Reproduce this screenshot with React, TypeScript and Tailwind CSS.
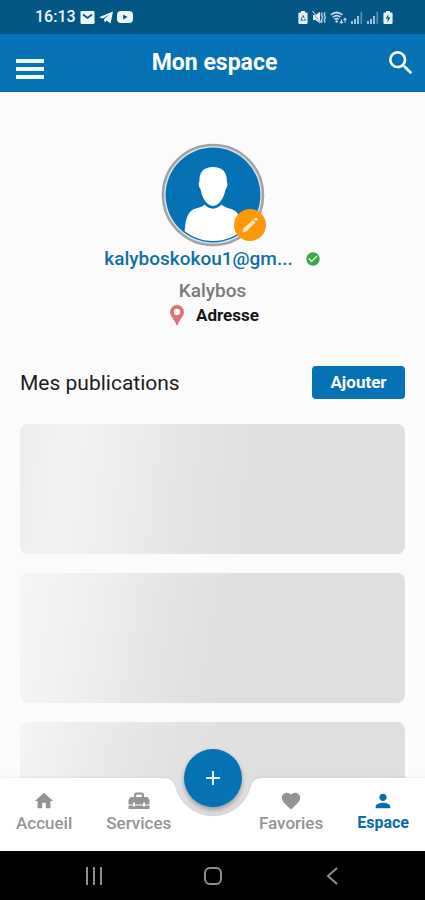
import type { ReactNode } from "react";
import {
  MdCheckCircle,
  MdFavorite,
  MdHome,
  MdPerson,
  MdSearch,
} from "react-icons/md";

const CARDS = [
  { id: 1, shade: "bg-[linear-gradient(96deg,#ececec_0%,#f3f3f3_12%,#e6e6e6_42%,#dfdfdf_64%)]" },
  { id: 2, shade: "bg-[linear-gradient(100deg,#f6f6f6_0%,#f1f1f1_14%,#e6e6e6_36%,#dfdfdf_54%)]" },
  { id: 3, shade: "bg-[linear-gradient(104deg,#f5f5f5_0%,#eaeaea_20%,#e3e3e3_38%,#dfdfdf_52%)]" },
];

function MailIcon() {
  return (
    <svg className="h-[13px] w-[15px]" viewBox="0 0 15 13" fill="none">
      <rect x="0.5" width="14" height="13" rx="1" fill="#eef6fb" />
      <path d="M3 3.5 7.5 7 12 3.5" stroke="#045685" strokeWidth="1.6" />
    </svg>
  );
}

function TelegramIcon() {
  return (
    <svg className="h-[13px] w-[14px]" viewBox="0 0 14 13" fill="#eef6fb">
      <path d="M0 6.2 14 .5 11.6 12.4 7.6 9.4 5.8 11.6 5 8.2 10.6 3.4 3.8 7.4Z" />
    </svg>
  );
}

function YoutubeIcon() {
  return (
    <svg className="h-3 w-4" viewBox="0 0 16 12">
      <rect width="16" height="12" rx="4" fill="#eef6fb" />
      <path d="M6.2 3.4v5.2L10.6 6Z" fill="#045685" />
    </svg>
  );
}

function RecycleBatteryIcon() {
  return (
    <svg className="h-[13px] w-[10px]" viewBox="0 0 10 13" fill="none">
      <path d="M3 0h4v1.6h1.6Q9.6 1.6 9.6 2.8v9Q9.6 13 8.4 13H1.6Q.4 13 .4 11.8v-9Q.4 1.6 1.4 1.6H3Z" fill="#e6f0f6" />
      <path d="M5 4.6 7.4 9.2H2.6Z" stroke="#045685" strokeWidth="1" strokeDasharray="2.6 1" />
    </svg>
  );
}

function MuteIcon() {
  return (
    <svg className="h-[13px] w-[14px]" viewBox="0 0 14 13" fill="none">
      <path d="M1 4h2.600L8 .8v11.400L3.600 9H1Z" fill="#e6f0f6" />
      <path d="M.6.8 9 12" stroke="#045685" strokeWidth="1" />
      <path d="M.6 0 9.400 12" stroke="#e6f0f6" strokeWidth="1" />
      <path d="M10 1.500 9.400 4l1.200 2.500L9.400 9l.6 2.500M13 1.500 12.200 4l1.200 2.500L12.200 9l.8 2.500" stroke="#c5dae7" strokeWidth="1.3" />
    </svg>
  );
}

function WifiIcon() {
  return (
    <svg className="h-[13px] w-[17px]" viewBox="0 0 17 13" fill="none" stroke="#c5dae7">
      <path d="M.8 3.800Q6.500-.8 12.400 3.800M2.800 6.200Q6.600 3.200 10.400 6.200M4.600 8.400Q6.600 6.800 8.600 8.400" strokeWidth="1.7" />
      <path d="m6.600 9 1.600 1.600-1.600 1.400L5 10.600Z" fill="#c5dae7" stroke="none" />
      <path d="M11.400 12V8.400M10 10.600l1.400 1.600 1.400-1.600M15 11.600V7.400M13.600 9 15 7.400 16.400 9" strokeWidth="1.1" />
    </svg>
  );
}

function SignalIcon() {
  return (
    <svg className="h-[13px] w-3" viewBox="0 0 12 13" fill="#9cc0d6">
      <path d="M0 10h2v3H0ZM3 8h2v5H3ZM6 5h2v8H6Z" />
      <path d="M9.5 1h1.6v12H9.5Z" fill="#5790b2" />
    </svg>
  );
}

function ChargingIcon() {
  return (
    <svg className="h-[13px] w-[10px]" viewBox="0 0 10 13">
      <path d="M3 0h4v1.6h1.6Q9.6 1.6 9.6 2.8v9Q9.6 13 8.4 13H1.6Q.4 13 .4 11.8v-9Q.4 1.6 1.4 1.6H3Z" fill="#e6f0f6" />
      <path d="M5.6 3.2 2.6 7.6h2.2L4.2 11.4 7.4 6.4H5.2Z" fill="#045685" />
    </svg>
  );
}

function Avatar() {
  return (
    <svg className="size-[104px]" viewBox="0 0 104 104">
      <defs>
        <clipPath id="disc">
          <circle cx="52" cy="52" r="46" />
        </clipPath>
      </defs>
      <circle cx="52" cy="52" r="50" fill="#dfe9f0" stroke="#a3a3a3" strokeWidth="2.6" />
      <circle cx="52" cy="52" r="47.4" fill="#0572b6" />
      <g clipPath="url(#disc)" fill="#fff">
        <path d="M52 24c9 0 14 5 13.8 13.6 0 1 .8 2 .6 4.4-.2 2.6-1.4 3-1.8 4.6C63 55 58 63 52 63s-11-8-12.4-16.400c-.4-1.600-1.600-2-1.800-4.600-.2-2.400.8-3.400.7-4.400C38.200 29 43 24 52 24Z" />
        <path d="M43.500 61.500c4.500 5.500 12.500 5.500 17 0 3 3.500 9 3.500 13 6 5.500 3.500 7 14 7.500 22.500V98H23.500v-8c.5-8.500 1.500-18 7-22.500 4-3 10-2.500 13-6Z" />
      </g>
    </svg>
  );
}

function PencilIcon() {
  return (
    <svg className="size-[18px]" viewBox="0 0 18 18" fill="#ffe9c8">
      <path d="M1.500 16.500 2.200 12.800 11.800 4 14.200 6.400 5 15.800Z" />
      <path d="m12.600 3.200 1.600-1.400q.8-.6 1.500.1l.6.700q.7.700 0 1.500L14.900 5.600Z" />
    </svg>
  );
}

function PinIcon() {
  return (
    <svg className="h-5 w-[14px]" viewBox="0 0 14 20" fill="#e07078">
      <path fillRule="evenodd" d="M7 0a7 7 0 0 1 7 7c0 4.500-5.200 8-6.300 13H6.300C5.200 15 0 11.500 0 7a7 7 0 0 1 7-7Zm0 3.800a3.200 3.200 0 1 0 0 6.400 3.200 3.200 0 0 0 0-6.400Z" />
    </svg>
  );
}

function ToolboxIcon() {
  return (
    <svg className="h-[22px] w-[22px]" viewBox="0 0 22 22" fill="currentColor">
      <path fillRule="evenodd" d="M6 7V4.800Q6 2.600 8.200 2.600h5.600q2.200 0 2.200 2.200V7h3.500L21.500 10v4.600H17V12.500h-2v2.100H7V12.500H5v2.100H.5V10L2.500 7Zm2.200 0h5.600V4.800H8.200Z" />
      <path d="M.5 15.600H5v1h2v-1h8v1h2v-1h4.500V19H.5Z" />
    </svg>
  );
}

function NavItem({ label, icon, active = false }: { label: string; icon: ReactNode; active?: boolean }) {
  return (
    <a
      href="#"
      aria-current={active ? "page" : undefined}
      className={active ? "flex flex-col items-center text-[#0a6ca9]" : "flex flex-col items-center text-[#949494]"}
    >
      {icon}
      <span className={active ? "text-base leading-[22px] font-bold" : "text-[17px] leading-[22px] font-medium"}>{label}</span>
    </a>
  );
}

export default function App() {
  return (
    <div className="flex h-screen flex-col overflow-hidden bg-[#fbfbfb] font-['Roboto',sans-serif]">
      <div className="flex h-[34px] shrink-0 items-center justify-between bg-[#045685] pr-8 pl-[35px]">
        <div className="flex items-center gap-1">
          <span className="text-base font-medium text-[#eef6fb]">16:13</span>
          <MailIcon />
          <TelegramIcon />
          <YoutubeIcon />
        </div>
        <div className="flex items-center gap-1">
          <RecycleBatteryIcon />
          <MuteIcon />
          <WifiIcon />
          <SignalIcon />
          <SignalIcon />
          <ChargingIcon />
        </div>
      </div>

      <header className="flex h-[58px] shrink-0 items-center justify-between bg-[#0572b6] pr-2 pl-4 text-white">
        <button type="button" aria-label="Menu" className="flex w-7 flex-col gap-1 pt-3">
          <span className="h-1 w-full bg-[#eef7fc]" />
          <span className="h-1 w-full bg-[#eef7fc]" />
          <span className="h-1 w-full bg-[#eef7fc]" />
        </button>
        <h1 className="text-[23px] font-bold">Mon espace</h1>
        <button type="button" aria-label="Rechercher">
          <MdSearch className="size-8" />
        </button>
      </header>

      <div className="relative min-h-0 flex-1">
        <main className="h-full overflow-hidden px-5 pt-[51px]">
          <section className="flex flex-col items-center">
            <div className="relative">
              <Avatar />
              <button
                type="button"
                aria-label="Modifier la photo"
                className="absolute -right-px bottom-[6px] grid size-8 place-items-center rounded-full bg-[#fe9808]"
              >
                <PencilIcon />
              </button>
            </div>
            <div className="flex items-center gap-3">
              <span className="text-[19px] leading-6 font-medium text-[#126ea8]">kalyboskokou1@gm...</span>
              <MdCheckCircle className="size-4 text-[#3fa648]" />
            </div>
            <p className="mt-2 text-[19px] leading-6 font-medium text-[#7a7a7a]">Kalybos</p>
            <div className="flex items-center gap-3 pl-1">
              <PinIcon />
              <span className="text-[17px] leading-6 font-bold text-[#161616]">Adresse</span>
            </div>
          </section>

          <section className="mt-[39px]">
            <div className="flex items-center justify-between">
              <h2 className="text-[21px] leading-6 text-[#1c1c1c]">Mes publications</h2>
              <button type="button" className="h-[33px] w-[93px] rounded bg-[#0572b6] text-[17px] font-bold text-white">
                Ajouter
              </button>
            </div>
            <div className="mt-[25px] flex flex-col gap-[19px]">
              {CARDS.map((card) => (
                <div key={card.id} className={`h-[130px] rounded-lg ${card.shade}`} />
              ))}
            </div>
          </section>
        </main>

        <div className="absolute inset-x-0 bottom-0">
          <div className="absolute inset-0 flex drop-shadow-[0_-1px_1px_rgba(0,0,0,0.06)]">
            <div className="flex-1 bg-white" />
            <svg className="h-full w-[100px]" viewBox="0 0 100 73" preserveAspectRatio="none" fill="#fff">
              <path d="M0 0C8 0 10 3 12 8A39 39 0 0 0 88 8C90 3 92 0 100 0V73H0Z" />
            </svg>
            <div className="flex-1 bg-white" />
          </div>
          <nav className="relative flex h-[73px] items-start justify-between px-4 pt-3">
            <div className="flex gap-[34px]">
              <NavItem label="Accueil" icon={<MdHome className="size-[22px]" />} />
              <NavItem label="Services" icon={<ToolboxIcon />} />
            </div>
            <div className="flex gap-[34px]">
              <NavItem label="Favories" icon={<MdFavorite className="size-[22px]" />} />
              <NavItem label="Espace" active icon={<MdPerson className="size-[22px]" />} />
            </div>
          </nav>
          <button
            type="button"
            aria-label="Ajouter une publication"
            className="absolute -top-[29px] left-1/2 grid size-[58px] -translate-x-1/2 place-items-center rounded-full bg-[#0572b6] shadow-[0_3px_5px_rgba(0,0,0,0.3)]"
          >
            <svg className="size-4" viewBox="0 0 16 16" stroke="#e8f4fb" strokeWidth="2">
              <path d="M8 1v14M1 8h14" />
            </svg>
          </button>
        </div>
      </div>

      <div className="grid h-[49px] shrink-0 grid-cols-3 place-items-center bg-black px-[34px]">
        <button type="button" aria-label="Applications récentes">
          <svg className="h-[18px] w-[18px]" viewBox="0 0 18 18" stroke="#8f8f8f" strokeWidth="2">
            <path d="M2 0v18M9 0v18M16 0v18" />
          </svg>
        </button>
        <button type="button" aria-label="Accueil du téléphone">
          <svg className="size-5" viewBox="0 0 20 20" fill="none" stroke="#8f8f8f" strokeWidth="2">
            <rect x="2" y="2" width="16" height="16" rx="5" />
          </svg>
        </button>
        <button type="button" aria-label="Retour">
          <svg className="h-[18px] w-3" viewBox="0 0 12 18" fill="none" stroke="#8f8f8f" strokeWidth="2">
            <path d="M11 1 2 9l9 8" />
          </svg>
        </button>
      </div>
    </div>
  );
}
